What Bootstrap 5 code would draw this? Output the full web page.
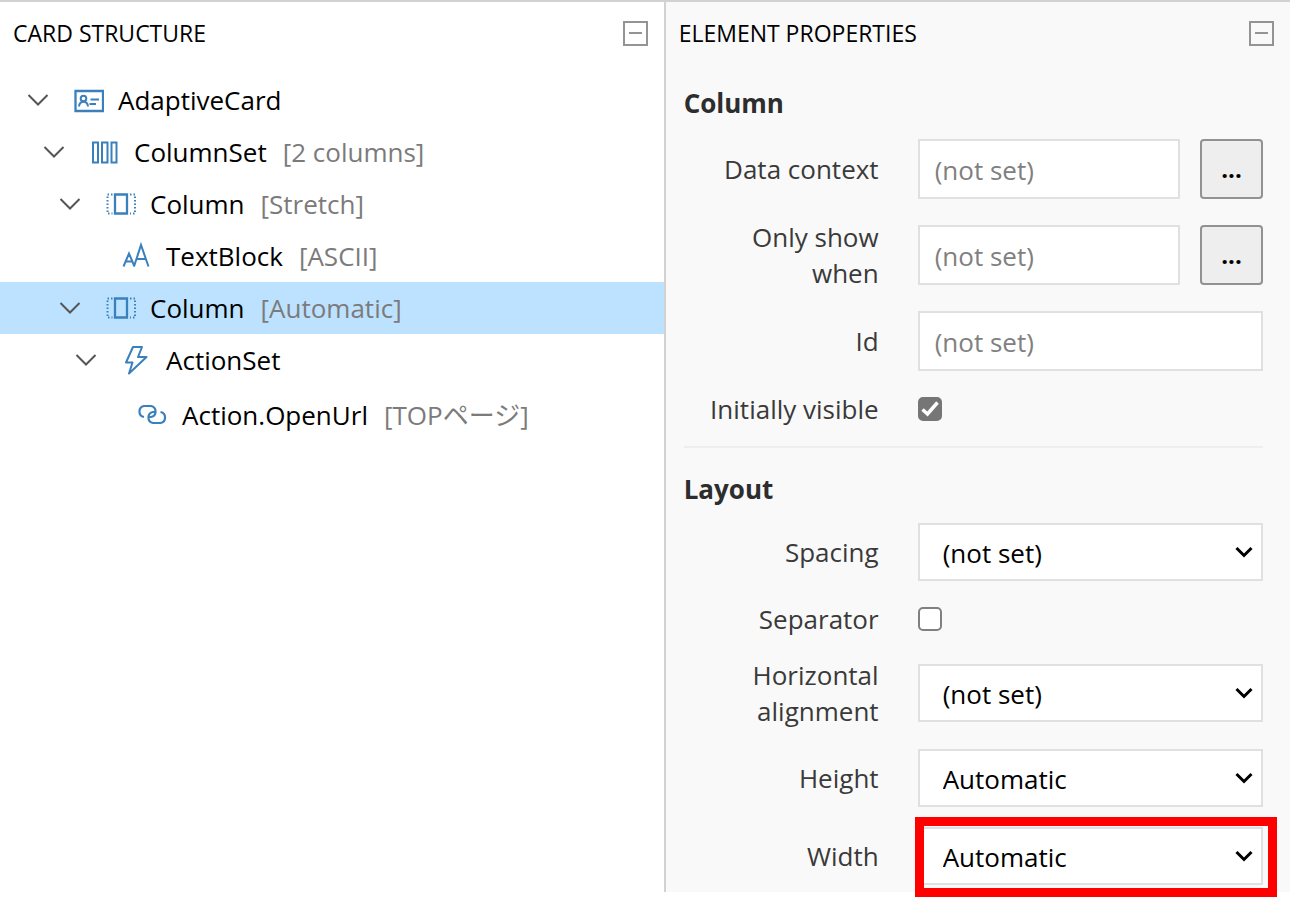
<!DOCTYPE html>
<html lang="en">
<head>
<meta charset="utf-8">
<meta name="viewport" content="width=device-width, initial-scale=1">
<title>Card designer</title>
<link href="https://cdn.jsdelivr.net/npm/bootstrap@5.3.0/dist/css/bootstrap.min.css" rel="stylesheet">
<style>
  body { font-family: "Open Sans", "Noto Sans CJK JP", sans-serif; font-size: 26px; line-height: 36px; color: #000; background: #fff; }
  .designer { border-top: 2px solid #d2d2d2; }
  .structure { flex: 0 0 51.6%; border-right: 2px solid #d2d2d2; }
  .properties { background: #f9f9f9; padding-bottom: 7px; }
  .pane-head { padding: 12px 16px 0 13px; height: 50px; }
  .pane-head h2 { font-size: 23px; line-height: 36px; font-weight: 400; }
  .toggle { width: 25px; height: 25px; border: 2px solid #949494; background: transparent; color: #949494; }
  .tree { padding-top: 22px; }
  .node { height: 52px; padding-left: 27px; }
  .node.tall { height: 58px; }
  .lv1 { padding-left: 43px; }
  .lv2 { padding-left: 59px; }
  .lv3 { padding-left: 75px; }
  .lv4 { padding-left: 91px; }
  .node.selected { background: #bde2ff; }
  .twist { width: 22px; height: 20px; margin-right: 25px; color: #555; }
  .glyph { width: 30px; height: 30px; margin-right: 14px; color: #3a80bd; }
  .detail { margin-left: 16px; color: #7b7b7b; }
  .form-body { padding: 0 27px 0 18px; }
  .form-body h3 { font-size: 26px; line-height: 36px; font-weight: 700; color: #2d2d2d; }
  .form-body .first-title { padding-top: 33px; margin-bottom: 18px; }
  .form-body .next-title { padding-top: 23px; margin-bottom: 16px; }
  .fields { display: grid; gap: 20px; }
  .prop { display: grid; grid-template-columns: 195px minmax(0, 1fr); column-gap: 39px; align-items: center; }
  .prop label { text-align: right; color: #3a3a3a; }
  .form-control, .form-select { font-size: 26px; line-height: 36px; border: 2px solid #e0e0e0; border-radius: 0; color: #000; }
  .form-control { height: 60px; padding: 2px 15px 0; }
  .form-control::placeholder { color: #808080; }
  .form-select { height: 58px; padding: 2px 40px 0 23px; background: #fff url("data:image/svg+xml,%3Csvg xmlns='http://www.w3.org/2000/svg' viewBox='0 0 18 12'%3E%3Cpath d='M1.500 2 9 9.500 16.500 2' fill='none' stroke='%23000' stroke-width='3'/%3E%3C/svg%3E") no-repeat right 8px center / 18px 12px; }
  .with-more { gap: 20px; }
  .more { flex: 0 0 63px; height: 60px; border: 2px solid #929292; border-radius: 4px; background: #eee; padding: 0; font-size: 24px; font-weight: 700; line-height: 36px; color: #000; }
  .form-check-input { width: 24px; height: 24px; border: 2px solid #808080; border-radius: 5px; background-color: #fff; margin: 0; display: block; }
  .form-check-input[type=checkbox] { border-radius: 5px; }
  .form-check-input:checked { background-color: #767676; border-color: #767676; }
  .form-check-input:checked[type=checkbox] { background-image: url("data:image/svg+xml,%3Csvg xmlns='http://www.w3.org/2000/svg' viewBox='0 0 20 20'%3E%3Cpath d='M2.500 10.500 7.500 15 17.500 3.500' fill='none' stroke='%23fff' stroke-width='3.500'/%3E%3C/svg%3E"); }
  .rule { border-top: 2px solid #eee; margin-top: 19px; }
  .callout { position: absolute; top: -10px; bottom: -12px; left: -3px; right: -14px; border: 9px solid #f00; pointer-events: none; }
</style>
</head>
<body class="min-vh-100">
<svg class="d-none" xmlns="http://www.w3.org/2000/svg">
  <symbol id="chev" viewBox="0 0 22 20"><path d="M1.500 5 11 14.500 20.500 5" fill="none" stroke="currentColor" stroke-width="2"/></symbol>
  <symbol id="i-card" viewBox="0 0 30 30"><g fill="none" stroke="currentColor" stroke-width="2"><path d="M1.500 6H29V26H1.500Z" stroke-width="2.300"/><circle cx="9.500" cy="13.500" r="2.800"/><path d="M5 21.500C5.500 15 13.500 15 14 21.500M16.500 14.500H25M15.500 19H22"/></g></symbol>
  <symbol id="i-set" viewBox="0 0 30 30"><path d="M3 5.500H8V25.500H3ZM12 5.500H17.500V25.500H12ZM21.500 5.500H26.500V25.500H21.500Z" fill="none" stroke="currentColor" stroke-width="2"/></symbol>
  <symbol id="i-col" viewBox="0 0 30 30"><g fill="none" stroke="currentColor" stroke-width="2"><path d="M9 5.500H21V24.500H9Z" stroke-width="2.300"/><path d="M6.500 5.500H1.500V24.500H6.500M24 5.500H29V24.500H24" stroke-dasharray="1.500 2"/></g></symbol>
  <symbol id="i-text" viewBox="0 0 30 30"><path d="M1.500 25.500 7 12.500 12.500 25.500M4 20.500H10.500M12 25.500 19 4 26.500 25.500M14.500 18H24" fill="none" stroke="currentColor" stroke-width="2"/></symbol>
  <symbol id="i-bolt" viewBox="0 0 30 30"><path d="M11 2H20L16 12H24.500L7 28.500L10.500 17.500H4Z" fill="none" stroke="currentColor" stroke-width="2" stroke-linejoin="round"/></symbol>
  <symbol id="i-link" viewBox="0 0 30 30"><path d="M6 17A5.600 5.600 0 0 1 6 6H13A5.600 5.600 0 0 1 13 17H11.500M22.500 12A5.600 5.600 0 0 1 22.500 23H15A5.600 5.600 0 0 1 15 12H16.500" fill="none" stroke="currentColor" stroke-width="2.200"/></symbol>
</svg>

<main class="designer d-flex align-items-stretch">
  <section class="structure">
    <header class="pane-head d-flex justify-content-between align-items-center">
      <h2 class="m-0">CARD STRUCTURE</h2>
      <button type="button" class="toggle d-flex p-0 align-items-center justify-content-center" aria-label="Collapse card structure"><svg width="13" height="2"><path d="M0 1H13" stroke="currentColor" stroke-width="2"/></svg></button>
    </header>
    <ul class="tree list-unstyled m-0">
      <li class="node d-flex align-items-center"><svg class="twist"><use href="#chev"/></svg><svg class="glyph"><use href="#i-card"/></svg><span>AdaptiveCard</span></li>
      <li class="node lv1 d-flex align-items-center"><svg class="twist"><use href="#chev"/></svg><svg class="glyph"><use href="#i-set"/></svg><span>ColumnSet</span><span class="detail">[2 columns]</span></li>
      <li class="node lv2 d-flex align-items-center"><svg class="twist"><use href="#chev"/></svg><svg class="glyph"><use href="#i-col"/></svg><span>Column</span><span class="detail">[Stretch]</span></li>
      <li class="node lv3 d-flex align-items-center"><span class="twist"></span><svg class="glyph"><use href="#i-text"/></svg><span>TextBlock</span><span class="detail">[ASCII]</span></li>
      <li class="node lv2 selected d-flex align-items-center"><svg class="twist"><use href="#chev"/></svg><svg class="glyph"><use href="#i-col"/></svg><span>Column</span><span class="detail">[Automatic]</span></li>
      <li class="node lv3 d-flex align-items-center"><svg class="twist"><use href="#chev"/></svg><svg class="glyph"><use href="#i-bolt"/></svg><span>ActionSet</span></li>
      <li class="node lv4 tall d-flex align-items-center"><span class="twist"></span><svg class="glyph"><use href="#i-link"/></svg><span>Action.OpenUrl</span><span class="detail">[TOPページ]</span></li>
    </ul>
  </section>

  <section class="properties flex-fill">
    <header class="pane-head d-flex justify-content-between align-items-center">
      <h2 class="m-0">ELEMENT PROPERTIES</h2>
      <button type="button" class="toggle d-flex p-0 align-items-center justify-content-center" aria-label="Collapse element properties"><svg width="13" height="2"><path d="M0 1H13" stroke="currentColor" stroke-width="2"/></svg></button>
    </header>
    <form class="form-body">
      <h3 class="first-title">Column</h3>
      <div class="fields">
        <div class="prop"><label for="ctx">Data context</label><div class="with-more d-flex align-items-center"><input id="ctx" class="form-control" type="text" placeholder="(not set)"><button type="button" class="more">...</button></div></div>
        <div class="prop"><label for="when">Only show when</label><div class="with-more d-flex align-items-center"><input id="when" class="form-control" type="text" placeholder="(not set)"><button type="button" class="more">...</button></div></div>
        <div class="prop"><label for="eid">Id</label><input id="eid" class="form-control" type="text" placeholder="(not set)"></div>
        <div class="prop"><label for="vis">Initially visible</label><input id="vis" class="form-check-input" type="checkbox" checked></div>
      </div>
      <div class="rule"></div>
      <h3 class="next-title">Layout</h3>
      <div class="fields">
        <div class="prop"><label for="spc">Spacing</label><select id="spc" class="form-select"><option>(not set)</option></select></div>
        <div class="prop"><label for="sep">Separator</label><input id="sep" class="form-check-input" type="checkbox"></div>
        <div class="prop"><label for="hal">Horizontal alignment</label><select id="hal" class="form-select"><option>(not set)</option></select></div>
        <div class="prop"><label for="hgt">Height</label><select id="hgt" class="form-select"><option>Automatic</option></select></div>
        <div class="prop"><label for="wid">Width</label><div class="position-relative"><select id="wid" class="form-select"><option>Automatic</option></select><span class="callout"></span></div></div>
      </div>
    </form>
  </section>
</main>
<script src="https://cdn.jsdelivr.net/npm/bootstrap@5.3.0/dist/js/bootstrap.bundle.min.js"></script>
</body>
</html>
